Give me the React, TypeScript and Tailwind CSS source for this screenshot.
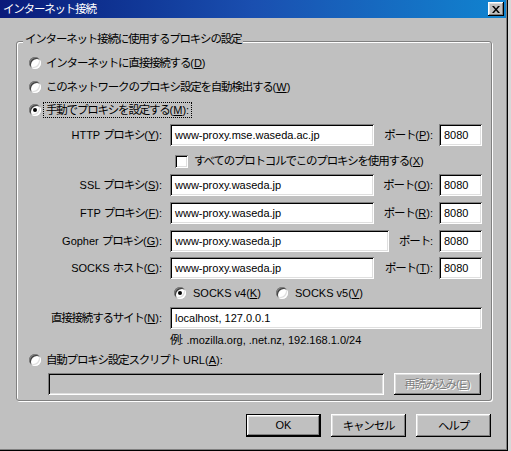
import React from "react";

const J = ({ children }: { children: React.ReactNode }) => (
  <span className="font-[Noto_Sans_CJK_JP,sans-serif] text-[11.5px] tracking-[-1.2px]">{children}</span>
);
const U = ({ children }: { children: React.ReactNode }) => <span className="underline underline-offset-[1px]">{children}</span>;

const SUNKEN =
  "shadow-[inset_1px_1px_0_#808080,inset_-1px_-1px_0_#ffffff,inset_2px_2px_0_#000000,inset_-2px_-2px_0_#dfdfdf]";
const RAISED =
  "shadow-[inset_-1px_-1px_0_#000000,inset_1px_1px_0_#ffffff,inset_-2px_-2px_0_#808080,inset_2px_2px_0_#dfdfdf]";

function Radio({ checked }: { checked?: boolean }) {
  return (
    <span className="relative inline-block w-[12px] h-[12px] shrink-0 rounded-full bg-white shadow-[inset_1px_1px_0_#808080,inset_-1px_-1px_0_#ffffff,inset_2px_2px_0_#404040,inset_-2px_-2px_0_#dfdfdf]">
      {checked && <span className="absolute left-[4px] top-[4px] w-[4px] h-[4px] rounded-full bg-black" />}
    </span>
  );
}

function Field({ value, w, disabled }: { value: string; w: string; disabled?: boolean }) {
  return (
    <div className={`${w} h-[22px] ${disabled ? "bg-[#c0c0c0]" : "bg-white"} ${SUNKEN} flex items-center pl-[5px] overflow-hidden whitespace-nowrap`}>
      {value}
    </div>
  );
}

function ProxyRow({
  label,
  port,
  wide,
  mt,
}: {
  label: React.ReactNode;
  port: React.ReactNode;
  wide?: boolean;
  mt: string;
}) {
  return (
    <div className={`flex items-center h-[22px] ${mt}`}>
      <div className="w-[145px] text-right whitespace-nowrap">{label}</div>
      <div className="ml-[8px]">
        <Field value="www-proxy.waseda.jp" w={wide ? "w-[219px]" : "w-[204px]"} />
      </div>
      <div className={`${wide ? "w-[44px]" : "w-[59px]"} text-right whitespace-nowrap`}>{port}</div>
      <div className="ml-[6px]">
        <Field value="8080" w="w-[43px]" />
      </div>
    </div>
  );
}

function Button({ children, def }: { children: React.ReactNode; def?: boolean }) {
  if (def)
    return (
      <div className="w-[75px] h-[23px] border border-black">
        <div className={`w-full h-full flex items-center justify-center ${RAISED}`}>{children}</div>
      </div>
    );
  return <div className={`w-[75px] h-[23px] flex items-center justify-center ${RAISED}`}>{children}</div>;
}

export default function App() {
  return (
    <div className="w-[511px] h-[451px] bg-[#d8d8d8] overflow-hidden font-[Liberation_Sans,Noto_Sans_CJK_JP,sans-serif] text-[11px] leading-none text-black">
      <div className="w-[508px] h-[451px] bg-[#c0c0c0] flex flex-col shadow-[inset_-1px_-1px_0_#000000,inset_-2px_-2px_0_#808080]">
        {/* Title bar */}
        <div className="w-[506px] h-[18px] bg-gradient-to-r from-[#0a1a7a] via-[#1a4fb0] to-[#1084d0] flex items-center justify-between pl-[3px] pr-[2px]">
          <span className="text-white">
            <J>インターネット接続</J>
          </span>
          <div className={`w-[16px] h-[14px] bg-[#c0c0c0] ${RAISED} flex items-center justify-center`}>
            <svg width="8" height="7" viewBox="0 0 8 7">
              <path d="M0 0h2l2 2.5L6 0h2L5 3.5 8 7H6L4 4.5 2 7H0l3-3.5z" fill="#000" />
            </svg>
          </div>
        </div>

        {/* Group box */}
        <div className="relative ml-[16px] mt-[23px] w-[476px] border border-[#808080] rounded-[3px] shadow-[1px_1px_0_#ffffff,inset_1px_1px_0_#ffffff] pb-[5px]">
          <div className="absolute left-[6px] -top-[10px] h-[14px] px-[2px] bg-[#c0c0c0] flex items-center whitespace-nowrap">
            <J>インターネット接続に使用するプロキシの設定</J>
          </div>

          <div className="flex items-center h-[16px] mt-[13px] ml-[12px]">
            <Radio />
            <span className="ml-[5px] whitespace-nowrap">
              <J>インターネットに直接接続する</J>(<U>D</U>)
            </span>
          </div>
          <div className="flex items-center h-[16px] mt-[8px] ml-[12px]">
            <Radio />
            <span className="ml-[5px] whitespace-nowrap">
              <J>このネットワークのプロキシ設定を自動検出する</J>(<U>W</U>)
            </span>
          </div>
          <div className="flex items-center h-[16px] mt-[7px] ml-[12px]">
            <Radio checked />
            <span className="ml-[2px] h-[16px] flex items-center border border-dotted border-black px-[2px] whitespace-nowrap">
              <J>手動でプロキシを設定する</J>(<U>M</U>):
            </span>
          </div>

          <div className="flex items-center h-[22px] mt-[6px]">
            <div className="w-[145px] text-right whitespace-nowrap">
              HTTP <J>プロキシ</J>(<U>Y</U>):
            </div>
            <div className="ml-[8px]">
              <Field value="www-proxy.mse.waseda.ac.jp" w="w-[204px]" />
            </div>
            <div className="w-[59px] text-right whitespace-nowrap">
              <J>ポート</J>(<U>P</U>):
            </div>
            <div className="ml-[6px]">
              <Field value="8080" w="w-[43px]" />
            </div>
          </div>

          <div className="flex items-center h-[14px] mt-[8px] ml-[158px]">
            <span className={`inline-block w-[13px] h-[13px] bg-white ${SUNKEN}`} />
            <span className="ml-[6px] whitespace-nowrap">
              <J>すべてのプロトコルでこのプロキシを使用する</J>(<U>X</U>)
            </span>
          </div>

          <ProxyRow
            mt="mt-[6px]"
            label={
              <>
                SSL <J>プロキシ</J>(<U>S</U>):
              </>
            }
            port={
              <>
                <J>ポート</J>(<U>O</U>):
              </>
            }
          />
          <ProxyRow
            mt="mt-[6px]"
            label={
              <>
                FTP <J>プロキシ</J>(<U>F</U>):
              </>
            }
            port={
              <>
                <J>ポート</J>(<U>R</U>):
              </>
            }
          />
          <ProxyRow
            mt="mt-[6px]"
            wide
            label={
              <>
                Gopher <J>プロキシ</J>(<U>G</U>):
              </>
            }
            port={
              <>
                <J>ポート</J>:
              </>
            }
          />
          <ProxyRow
            mt="mt-[5px]"
            label={
              <>
                SOCKS <J>ホスト</J>(<U>C</U>):
              </>
            }
            port={
              <>
                <J>ポート</J>(<U>T</U>):
              </>
            }
          />

          <div className="flex items-center h-[16px] mt-[6px] ml-[157px]">
            <Radio checked />
            <span className="ml-[7px] w-[83px] whitespace-nowrap">
              SOCKS v4(<U>K</U>)
            </span>
            <Radio />
            <span className="ml-[7px] whitespace-nowrap">
              SOCKS v5(<U>V</U>)
            </span>
          </div>

          <div className="flex items-center h-[22px] mt-[6px]">
            <div className="w-[145px] text-right whitespace-nowrap">
              <J>直接接続するサイト</J>(<U>N</U>):
            </div>
            <div className="ml-[8px]">
              <Field value="localhost, 127.0.0.1" w="w-[312px]" />
            </div>
          </div>

          <div className="flex items-center h-[14px] mt-[4px] ml-[153px] whitespace-nowrap">
            <J>例</J>: .mozilla.org, .net.nz, 192.168.1.0/24
          </div>

          <div className="flex items-center h-[16px] mt-[5px] ml-[12px]">
            <Radio />
            <span className="ml-[5px] whitespace-nowrap">
              <J>自動プロキシ設定スクリプト</J> URL(<U>A</U>):
            </span>
          </div>

          <div className="flex items-center h-[22px] mt-[5px] ml-[31px]">
            <Field value="" w="w-[336px]" disabled />
            <div className={`ml-[10px] w-[87px] h-[22px] flex items-center justify-center ${RAISED} text-[#808080] [text-shadow:1px_1px_0_#ffffff] whitespace-nowrap`}>
              <J>再読み込み</J>(<U>E</U>)
            </div>
          </div>
        </div>

        {/* Buttons */}
        <div className="flex gap-[10px] ml-[246px] mt-[13px]">
          <Button def>OK</Button>
          <Button>
            <J>キャンセル</J>
          </Button>
          <Button>
            <J>ヘルプ</J>
          </Button>
        </div>
      </div>
    </div>
  );
}
